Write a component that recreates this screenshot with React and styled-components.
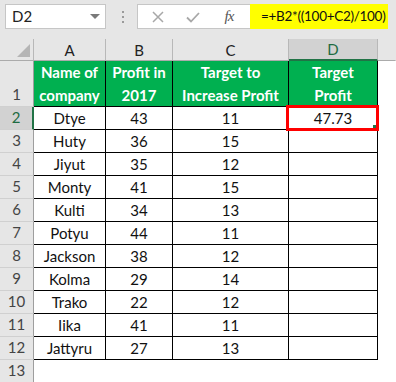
import React from 'react';
import styled, { createGlobalStyle } from 'styled-components';

const GlobalStyle = createGlobalStyle`
  html, body {
    margin: 0;
    padding: 0;
    background: #ffffff;
  }
  * {
    box-sizing: border-box;
  }
`;

const rows = [
  ['Dtye', 43, 11, '47.73'],
  ['Huty', 36, 15, ''],
  ['Jiyut', 35, 12, ''],
  ['Monty', 41, 15, ''],
  ['Kulti', 34, 13, ''],
  ['Potyu', 44, 11, ''],
  ['Jackson', 38, 12, ''],
  ['Kolma', 29, 14, ''],
  ['Trako', 22, 12, ''],
  ['Iika', 41, 11, ''],
  ['Jattyru', 27, 13, ''],
];

const Page = styled.div`
  width: 396px;
  height: 382px;
  overflow: hidden;
  font-family: Lato, 'Open Sans', sans-serif;
  background: #ffffff;
`;

// formula bar
const Toolbar = styled.div`
  display: flex;
  align-items: flex-start;
  height: 39px;
  padding: 4px 0 0 5px;
  background: #e6e6e6;
`;

const NameBox = styled.div`
  position: relative;
  width: 101px;
  height: 25px;
  background: #fff;
  border: 1px solid #c6c6c6;
  padding-left: 6px;
  font-size: 15px;
  line-height: 23px;
  color: #222;
`;

const Caret = styled.span`
  position: absolute;
  right: 5px;
  top: 9px;
  width: 0;
  height: 0;
  border-left: 5px solid transparent;
  border-right: 5px solid transparent;
  border-top: 5px solid #7a7a7a;
`;

const Dots = styled.div`
  width: 31px;
  height: 25px;
  display: flex;
  flex-direction: column;
  align-items: center;
  justify-content: center;
  gap: 3px;
  padding-left: 2px;

  span {
    width: 2px;
    height: 2px;
    background: #9a9a9a;
  }
`;

const Buttons = styled.div`
  display: flex;
  align-items: center;
  width: 113px;
  height: 25px;
  background: #fff;
  border: 1px solid #c6c6c6;
  border-right: none;
`;

const IconSlot = styled.div`
  display: flex;
  align-items: center;
  justify-content: center;
  width: ${(p) => p.$w}px;
  height: 100%;
`;

const Fx = styled.span`
  font-family: 'Liberation Serif', serif;
  font-style: italic;
  font-size: 15px;
  color: #555;
  letter-spacing: -1px;
`;

const Formula = styled.div`
  width: 138px;
  height: 25px;
  background: #ffff00;
  font-size: 13.5px;
  letter-spacing: -0.3px;
  line-height: 24px;
  padding-left: 11px;
  color: #111;
  white-space: nowrap;
  overflow: hidden;
`;

// grid
const Sheet = styled.div`
  display: grid;
  grid-template-columns: 34px 72px 67px 116px 89px 1fr;
  grid-template-rows: 22px 46px repeat(12, 23px);
`;

const ColHead = styled.div`
  display: flex;
  align-items: center;
  justify-content: center;
  font-size: 15px;
  color: ${(p) => (p.$active ? '#1e6b42' : '#222')};
  background: ${(p) => (p.$active ? '#d2d2d2' : '#e6e6e6')};
  border-right: 1px solid ${(p) => (p.$last ? 'transparent' : '#b8b8b8')};
  border-bottom: ${(p) => (p.$active ? '2px solid #217346' : '1px solid #ababab')};
`;

const Corner = styled.div`
  position: relative;
  background: #e6e6e6;
  border-right: 1px solid #b8b8b8;
  border-bottom: 1px solid #ababab;

  &::after {
    content: '';
    position: absolute;
    right: 3px;
    bottom: 3px;
    width: 0;
    height: 0;
    border-left: 13px solid transparent;
    border-bottom: 13px solid #b5b5b5;
  }
`;

const RowHead = styled.div`
  display: flex;
  align-items: flex-end;
  justify-content: center;
  padding-bottom: 1px;
  font-size: 15px;
  line-height: 21px;
  color: ${(p) => (p.$active ? '#1e6b42' : '#444')};
  background: ${(p) => (p.$active ? '#d2d2d2' : '#e6e6e6')};
  border-bottom: 1px solid #d0d0d0;
  border-right: ${(p) => (p.$active ? '2px solid #217346' : '1px solid #9e9e9e')};
`;

const HeadCell = styled.div`
  display: flex;
  align-items: center;
  justify-content: center;
  text-align: center;
  background: #00b050;
  color: #fff;
  font-weight: 700;
  font-size: 15px;
  line-height: 23px;
  white-space: nowrap;
  border-right: 1px solid #000;
  border-bottom: 1px solid #000;
`;

const Cell = styled.div`
  display: flex;
  align-items: center;
  justify-content: center;
  font-size: 15px;
  color: #111;
  border-right: 1px solid #000;
  border-bottom: 1px solid #000;
`;

const Selected = styled(Cell)`
  position: relative;

  &::after {
    content: '';
    position: absolute;
    left: -3px;
    top: -2px;
    right: -2px;
    bottom: -2px;
    border: 3px solid #ff0000;
  }

  &::before {
    content: '';
    position: absolute;
    right: 1px;
    bottom: 1px;
    width: 3px;
    height: 3px;
    background: #217346;
    z-index: 1;
  }
`;

const Blank = styled.div`
  background: #fff;
`;

const Cross = () => (
  <svg width="14" height="14" viewBox="0 0 14 14">
    <path d="M2 2 L12 12 M12 2 L2 12" stroke="#a8a8a8" strokeWidth="1.5" fill="none" />
  </svg>
);

const Check = () => (
  <svg width="16" height="14" viewBox="0 0 16 14">
    <path d="M2 7.5 L6 11.5 L14 3" stroke="#a8a8a8" strokeWidth="1.8" fill="none" />
  </svg>
);

const App = () => {
  return (
    <Page>
      <GlobalStyle />
      <Toolbar>
        <NameBox>
          D2
          <Caret />
        </NameBox>
        <Dots>
          <span />
          <span />
          <span />
        </Dots>
        <Buttons>
          <IconSlot $w={40}>
            <Cross />
          </IconSlot>
          <IconSlot $w={30}>
            <Check />
          </IconSlot>
          <IconSlot $w={42}>
            <Fx>fx</Fx>
          </IconSlot>
        </Buttons>
        <Formula>=+B2*((100+C2)/100)</Formula>
      </Toolbar>

      <Sheet>
        <Corner />
        <ColHead>A</ColHead>
        <ColHead>B</ColHead>
        <ColHead>C</ColHead>
        <ColHead $active>D</ColHead>
        <ColHead $last />

        <RowHead>1</RowHead>
        <HeadCell>
          Name of
          <br />
          company
        </HeadCell>
        <HeadCell>
          Profit in
          <br />
          2017
        </HeadCell>
        <HeadCell>
          Target to
          <br />
          Increase Profit
        </HeadCell>
        <HeadCell>
          Target
          <br />
          Profit
        </HeadCell>
        <Blank />

        {rows.map(([name, profit, target, result], i) => (
          <React.Fragment key={name}>
            <RowHead $active={i === 0}>{i + 2}</RowHead>
            <Cell>{name}</Cell>
            <Cell>{profit}</Cell>
            <Cell>{target}</Cell>
            {i === 0 ? <Selected>{result}</Selected> : <Cell>{result}</Cell>}
            <Blank />
          </React.Fragment>
        ))}

        <RowHead>13</RowHead>
        <Blank />
        <Blank />
        <Blank />
        <Blank />
        <Blank />
      </Sheet>
    </Page>
  );
};

export default App;
